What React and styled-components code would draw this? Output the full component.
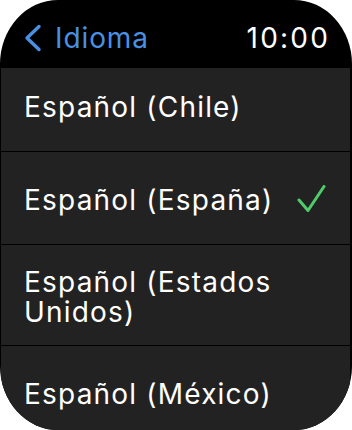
import React from "react";
import styled, { createGlobalStyle } from "styled-components";

const Global = createGlobalStyle`
  html, body { margin: 0; padding: 0; background: #fff; overflow: hidden; }
  #root { width: 352px; height: 430px; }
`;

const Screen = styled.div`
  width: 352px;
  height: 430px;
  background: #000;
  border-radius: 58px / 64px;
  overflow: hidden;
  display: flex;
  flex-direction: column;
  font-family: "Inter", "Liberation Sans", sans-serif;
  -webkit-font-smoothing: antialiased;
`;

const Header = styled.header`
  flex: 0 0 68px;
  display: flex;
  align-items: center;
  justify-content: space-between;
  padding: 7px 24px 0 24px;
  box-sizing: border-box;
`;

const Back = styled.div`
  display: flex;
  align-items: center;
  gap: 13px;
  color: #4a90e2;
  font-size: 28px;
  line-height: 30px;
  letter-spacing: 0.9px;
`;

const Time = styled.div`
  color: #fff;
  font-size: 28px;
  line-height: 30px;
  letter-spacing: 2.2px;
  margin-right: -2px;
`;

const List = styled.div`
  flex: 1;
  overflow: hidden;
`;

const Scroller = styled.div`
  display: flex;
  flex-direction: column;
  gap: 1px;
  margin-top: -9px;
`;

const Row = styled.div`
  min-height: 92px;
  box-sizing: border-box;
  margin: 0 2px 0 1px;
  padding: 22px 23px 18px 23px;
  background: #222;
  display: flex;
  align-items: center;
  justify-content: space-between;
  gap: 12px;
  color: #fff;
  font-size: 28px;
  line-height: 30px;
  letter-spacing: 1.2px;
`;

const Label = styled.span`
  flex: 1;
`;

const Chevron = () => (
  <svg width="18" height="28" viewBox="0 0 18 28" fill="none">
    <polyline
      points="15,2.5 3,14 15,25.5"
      stroke="#4a90e2"
      strokeWidth="3.4"
      strokeLinecap="round"
      strokeLinejoin="round"
    />
  </svg>
);

const Check = () => (
  <svg width="30" height="30" viewBox="0 0 30 30" fill="none">
    <polyline
      points="2,15 11,25.5 27,1.5"
      stroke="#4fcb6a"
      strokeWidth="3"
      strokeLinecap="round"
      strokeLinejoin="round"
    />
  </svg>
);

const items = [
  { label: "Español (Chile)" },
  { label: "Español (España)", checked: true },
  { label: "Español (Estados Unidos)" },
  { label: "Español (México)" },
];

export default function App() {
  return (
    <>
      <Global />
      <Screen>
        <Header>
          <Back>
            <Chevron />
            <span>Idioma</span>
          </Back>
          <Time>10:00</Time>
        </Header>
        <List>
          <Scroller>
            {items.map((it) => (
              <Row key={it.label}>
                <Label>{it.label}</Label>
                {it.checked && <Check />}
              </Row>
            ))}
          </Scroller>
        </List>
      </Screen>
    </>
  );
}
